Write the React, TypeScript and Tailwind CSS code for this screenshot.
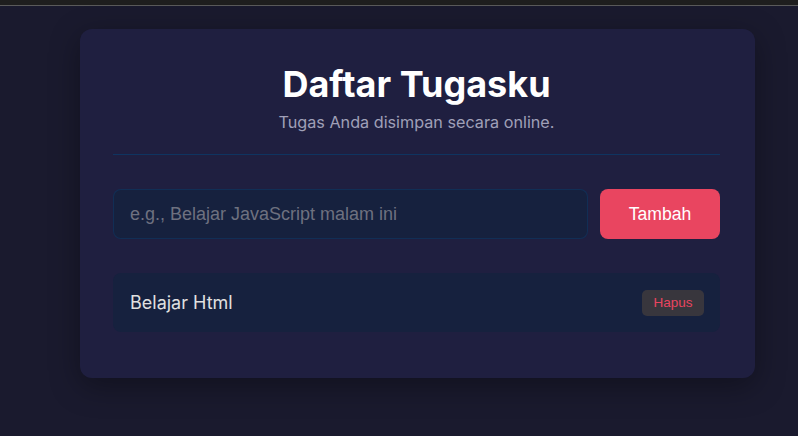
import { useState } from "react";

interface Task {
  id: number;
  text: string;
}

export default function App() {
  const [tasks, setTasks] = useState<Task[]>([{ id: 1, text: "Belajar Html" }]);
  const [input, setInput] = useState("");

  const addTask = () => {
    const text = input.trim();
    if (!text) return;
    setTasks((prev) => [...prev, { id: Date.now(), text }]);
    setInput("");
  };

  const removeTask = (id: number) => {
    setTasks((prev) => prev.filter((t) => t.id !== id));
  };

  return (
    <div className="min-h-[436px] bg-[#1a1a2e] font-['Inter',sans-serif]">
      <div className="h-[6px] bg-[#1e1e1e] border-b border-[#5a5a5a]" />

      <div className="ml-[80px] mt-[23px] w-[675px] rounded-xl bg-[#1f1f40] pl-[33px] pr-[35px] pt-[34px] pb-[46px] shadow-[0_8px_30px_rgba(0,0,0,0.35)]">
        <div className="border-b border-[#0f3460] pb-[20px] text-center">
          <h1 className="text-[36px] leading-[1.2] font-bold text-white">
            Daftar Tugasku
          </h1>
          <p className="mt-1 text-[16.2px] leading-6 text-[#a0a0b8]">
            Tugas Anda disimpan secara online.
          </p>
        </div>

        <div className="mt-[34px] flex gap-3">
          <input
            type="text"
            value={input}
            onChange={(e) => setInput(e.target.value)}
            onKeyDown={(e) => e.key === "Enter" && addTask()}
            placeholder="e.g., Belajar JavaScript malam ini"
            className="h-[50px] flex-1 rounded-lg border border-[#0f3460]/70 bg-[#16213e] px-4 font-['Liberation_Sans',Arial,sans-serif] text-[18px] text-white placeholder:text-[#6e7180] outline-none"
          />
          <button
            onClick={addTask}
            className="h-[50px] w-[120px] rounded-lg bg-[#e94560] font-['Liberation_Sans',Arial,sans-serif] text-[1.1rem] text-white"
          >
            Tambah
          </button>
        </div>

        <ul className="mt-[34px] flex flex-col gap-3">
          {tasks.map((task) => (
            <li
              key={task.id}
              className="flex h-[59px] items-center justify-between rounded-lg bg-[#16213e] pl-[17px] pr-4"
            >
              <span className="text-[18px] text-[#e0e0e0]">{task.text}</span>
              <button
                onClick={() => removeTask(task.id)}
                className="h-[26px] w-[62px] rounded-[5px] bg-[#38363d] font-['Liberation_Sans',Arial,sans-serif] text-[13.5px] text-[#e94560]"
              >
                Hapus
              </button>
            </li>
          ))}
        </ul>
      </div>
    </div>
  );
}
